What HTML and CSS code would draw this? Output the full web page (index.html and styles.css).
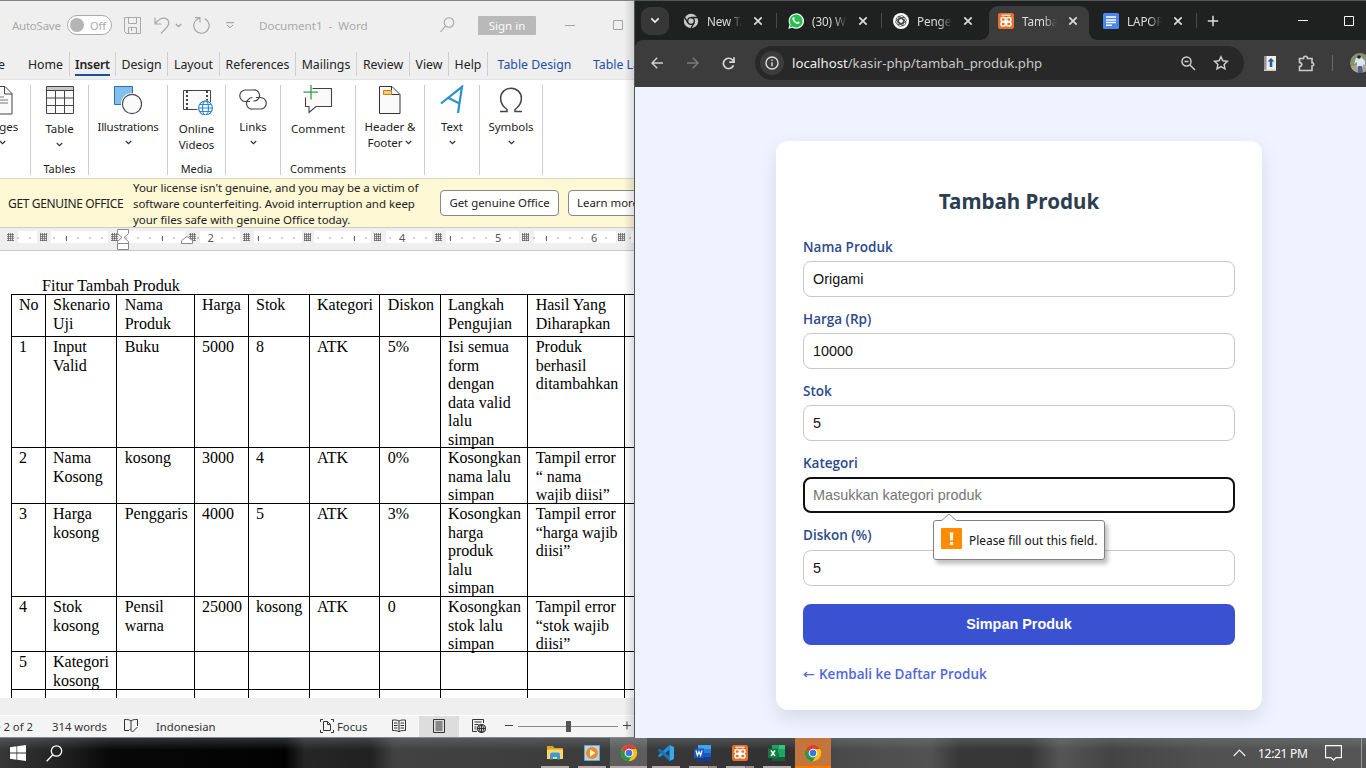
FILE: index.html
```html
<!DOCTYPE html>
<html lang="id">
<head>
<meta charset="utf-8">
<title>Tambah Produk</title>
<link rel="stylesheet" href="styles.css">
</head>
<body>
<svg class="defs" width="0" height="0">
  <defs>
    <symbol id="chev" viewBox="0 0 7 5"><path d="M.8 1l2.7 2.6L6.2 1" fill="none" stroke="#333" stroke-width="1.2"/></symbol>
    <symbol id="x" viewBox="0 0 10 10"><path d="M1.3 1.3l7.4 7.4M8.7 1.3L1.3 8.7" stroke="#dcdcdc" stroke-width="1.7"/></symbol>
    <symbol id="chrome" viewBox="0 0 18 18">
      <circle cx="9" cy="9" r="8.2" fill="#fbc116"/>
      <path d="M1.9 4.9A8.2 8.2 0 0 1 16.1 4.9L9 5.2 5.6 11z" fill="#e33b2e"/>
      <path d="M1.9 4.9A8.2 8.2 0 0 0 8.6 17.2L12.4 11 5.7 10.8z" fill="#279847"/>
      <circle cx="9" cy="9" r="4.3" fill="#fff"/><circle cx="9" cy="9" r="3.3" fill="#3578e5"/>
    </symbol>
    <symbol id="xampp" viewBox="0 0 16 16">
      <rect width="16" height="16" rx="2" fill="#e8702a"/>
      <path d="M3.500 2.200h9" stroke="#fff" stroke-width="1"/>
      <rect x="3" y="4.600" width="4.400" height="3.800" rx="1.600" fill="none" stroke="#fff" stroke-width="1.500"/>
      <rect x="8.600" y="4.600" width="4.400" height="3.800" rx="1.600" fill="none" stroke="#fff" stroke-width="1.500"/>
      <rect x="3" y="9" width="4.400" height="4" rx="1.600" fill="none" stroke="#fff" stroke-width="1.500"/>
      <rect x="8.600" y="9" width="4.400" height="4" rx="1.600" fill="none" stroke="#fff" stroke-width="1.500"/>
      <path d="M6 8.700h4" stroke="#fff" stroke-width="1.800"/>
    </symbol>
    <pattern id="grid" width="2" height="2" patternUnits="userSpaceOnUse"><path d="M0 .5h2M.5 0v2" stroke="#666" stroke-width=".8"/></pattern>
  </defs>
</svg>

<div class="desktop">
  <section class="word">
    <header class="titlebar">
      <span class="autosave">AutoSave</span>
      <span class="toggle"><i></i>Off</span>
      <svg class="i-save" width="17" height="17" viewBox="0 0 17 17" fill="none" stroke="#a9a9a9"><path d="M.5.5h16v16H2.500L.5 14.500zM4.500.5v6h8v-6M4.500 16.500v-6h8v6M7.500 11v3"/></svg>
      <svg class="i-undo" width="16" height="17" viewBox="0 0 16 17" fill="none" stroke="#a9a9a9" stroke-width="1.200"><path d="M1 .5v6.500h6.500M1.300 6.700C4 3 7 1 10.500 1.200c4.500.5 5.500 5.800 2.500 8.800l-6 6.500"/></svg>
      <svg class="i-uchev" width="7" height="5" viewBox="0 0 7 5"><path d="M.8 1l2.700 2.600L6.200 1" fill="none" stroke="#a0a0a0" stroke-width="1.200"/></svg>
      <svg class="i-redo" width="17" height="17" viewBox="0 0 17 17" fill="none" stroke="#a9a9a9" stroke-width="1.200"><path d="M2 .6h5v5M6.700 1C2.500 2.500.7 5.500.7 8.800a7.700 7.700 0 1 0 11-7.200"/></svg>
      <svg class="i-menu" width="8" height="7" viewBox="0 0 8 7" fill="none" stroke="#999"><path d="M0 .7h8M1 3l3 2.700L7 3"/></svg>
      <span class="doc">Document1&nbsp; -&nbsp; Word</span>
      <svg class="i-find" width="15" height="16" viewBox="0 0 15 16" fill="none" stroke="#a3a3a3" stroke-width="1.100"><circle cx="9" cy="5.500" r="4.800"/><path d="M5.600 9L.5 15"/></svg>
      <span class="signin">Sign in</span>
      <svg class="i-min" width="10" height="11" viewBox="0 0 10 11"><path d="M0 5.500h10" stroke="#a3a3a3"/></svg>
      <svg class="i-max" width="10" height="10" viewBox="0 0 10 10"><path d="M.5.500h9v9h-9z" fill="none" stroke="#a3a3a3"/></svg>
    </header>
    <nav class="tabs">
      <span class="t-file">File</span><span class="t-home">Home</span><span class="on"><b>Insert</b></span><span>Design</span><span>Layout</span><span>References</span><span>Mailings</span><span>Review</span><span>View</span><span>Help</span><span class="blue">Table Design</span><span class="blue tl">Table Layout</span>
    </nav>
    <div class="ribbon">
      <div class="grp pages">
        <svg width="22" height="30" viewBox="0 0 22 30"><path d="M1 1.500h13l7 7V29H1z" fill="#fafafa" stroke="#444"/><path d="M13.500 1.500v7.500h7.500" fill="none" stroke="#444"/><path d="M3 12h10M3 15h14M3 18h14" stroke="#777"/></svg>
        <span>Pages</span><svg class="cv"><use href="#chev"/></svg>
      </div>
      <div class="grp low">
        <svg width="28" height="30" viewBox="0 0 28 30"><path d="M.500 1.500h27v27H.500z" fill="#fafafa"/><path d="M.5 1.500h27V5H.5z" fill="#c8c8c8"/><path d="M.5 1.500h27v27H.500zM.5 5.500h27M.5 13h27M.5 20.500h27M9.500 5.500v23M18.500 5.500v23" fill="none" stroke="#444"/></svg>
        <span>Table</span><svg class="cv"><use href="#chev"/></svg><em>Tables</em>
      </div>
      <div class="grp">
        <svg width="28" height="30" viewBox="0 0 28 30"><path d="M.5 1.500h18v18H.500z" fill="#83beec" stroke="#2a6fb0"/><circle cx="18" cy="19" r="11" fill="#fff"/><circle cx="18" cy="19" r="9.600" fill="#fafafa" stroke="#444" stroke-width="1.100"/></svg>
        <span class="tight">Illustrations</span><svg class="cv"><use href="#chev"/></svg>
      </div>
      <div class="grp low">
        <svg class="vid" width="30" height="30" viewBox="0 0 30 30"><path d="M.5 5.500h27v19H.500z" fill="#fafafa" stroke="#444"/><path d="M4 6v18M24 6v18" stroke="#444" stroke-width="2" stroke-dasharray="2 2"/><circle cx="22.500" cy="23.500" r="8.300" fill="#fff"/><g fill="#fff" stroke="#2b88d8" stroke-width="1.200"><circle cx="22.500" cy="23" r="6.900"/><ellipse cx="22.500" cy="23" rx="3" ry="6.900"/><path d="M15.600 23h14M17 19.500h11M17 26.500h11"/></g></svg>
        <span>Online<br>Videos</span><em>Media</em>
      </div>
      <div class="grp">
        <svg width="28" height="30" viewBox="0 0 28 30" fill="none" stroke="#444" stroke-width="1.200"><path d="M11 16.500H6.500a5.500 5.500 0 0 1 0-11.500h8a5.500 5.500 0 0 1 4 9.700q-1.500 1.300-4 1.300"/><path d="M17 12.500h4.500a5.500 5.500 0 0 1 0 11.500h-8a5.500 5.500 0 0 1-4-9.700q1.500-1.800 4-1.800"/></svg>
        <span>Links</span><svg class="cv"><use href="#chev"/></svg>
      </div>
      <div class="grp low">
        <svg width="30" height="30" viewBox="0 0 30 30"><path d="M9 3.500h19.500v18H13l-7 6v-6H2.500v-9" fill="#fafafa" stroke="#444" stroke-width="1.100"/><path d="M8 0v14M.5 7h15" stroke="#fff" stroke-width="3"/><path d="M8 0v14.500M.5 7.200H15" stroke="#2f9e4f" stroke-width="1.300"/></svg>
        <span class="wide">Comment</span><em>Comments</em>
      </div>
      <div class="grp">
        <svg width="22" height="30" viewBox="0 0 22 30"><path d="M.5 1.500h12.500l8 8V28.500H.5z" fill="#fafafa" stroke="#333"/><path d="M12.500 1.500v8h8" fill="none" stroke="#333"/><path d="M4.500 5.500h8v4h-8z" fill="#fccb76" stroke="#d27a13"/></svg>
        <span>Header &amp;<br>Footer <svg class="cv in"><use href="#chev"/></svg></span>
      </div>
      <div class="grp">
        <svg width="24" height="30" viewBox="0 0 24 30" fill="none" stroke="#2e8fce" stroke-width="2.200"><path d="M1 18.500L22 1.800 18 28M8.500 13L19.500 18.500"/></svg>
        <span>Text</span><svg class="cv"><use href="#chev"/></svg>
      </div>
      <div class="grp">
        <svg width="26" height="30" viewBox="0 0 26 30" fill="none" stroke="#444" stroke-width="1.500"><path d="M2 26.500h7v-2C5 21.500 2.600 18 2.600 13.500 2.600 7.500 7 3.300 13 3.300s10.400 4.200 10.400 10.200c0 4.500-2.400 8-6.400 11v2h7"/></svg>
        <span>Symbols</span><svg class="cv"><use href="#chev"/></svg>
      </div>
    </div>
    <div class="notice">
      <span class="n-title">GET GENUINE OFFICE</span>
      <p>Your license isn't genuine, and you may be a victim of<br>software counterfeiting. Avoid interruption and keep<br>your files safe with genuine Office today.</p>
      <span class="btn">Get genuine Office</span><span class="btn b2">Learn more</span>
    </div>
    <div class="ruler">
      <svg width="635" height="22" viewBox="0 0 635 22">
        <path fill="#fff" d="M18 3h19v12H18zM51 3h57v12H51zM124 3h61v12h-61zM200 3h40v12h-40zM254 3h48v12h-48zM314 3h57v12h-57zM386 3h46v12h-46zM446 3h73v12h-73zM534 3h82v12h-82zM631 3h4v12h-4z"/>
        <path stroke="#666" stroke-width="1.200" stroke-dasharray="1.200 10.800" d="M17.500 10H200M221.500 10H392M413.500 10H488M509.500 10H584M605.500 10H635"/>
        <path stroke="#666" d="M66.500 8v5M162.500 8v5M258.500 8v5M354.500 8v5M450.500 8v5M546.500 8v5"/>
        <path fill="#efefef" d="M5 4h11v10H5zM38 4h11v10H38zM110 4h8v10h-8zM188 4h9v10h-9zM241 4h11v10h-11zM303 4h10v10h-10zM372 4h11v10h-11zM433 4h11v10h-11zM520 4h11v10h-11zM617 4h11v10h-11z"/>
        <path fill="url(#grid)" d="M7 5h7v8H7zM40 5h7v8h-7zM111 5h7v8h-7zM189 5h7v8h-7zM243 5h7v8h-7zM304 5h7v8h-7zM374 5h7v8h-7zM435 5h7v8h-7zM522 5h7v8h-7zM618 5h7v8h-7z"/>
        <path fill="#fff" stroke="#888" d="M117.500 1.500h11v4l-4.500 4 4.500 4v2h-11v-2l4.500-4-4.500-4zM117.500 15.500h11v6h-11zM181.500 15.500v-3l5.500-4 5.500 4v3z"/>
        <g class="rnum"><text x="207.500" y="13.500">2</text><text x="399" y="13.500">4</text><text x="495" y="13.500">5</text><text x="591" y="13.500">6</text></g>
      </svg>
    </div>
    <div class="paper">
      <div class="caption">Fitur Tambah Produk</div>
      <div class="table">
        <div>No</div><div>Skenario<br>Uji</div><div>Nama<br>Produk</div><div>Harga</div><div>Stok</div><div>Kategori</div><div>Diskon</div><div>Langkah<br>Pengujian</div><div>Hasil Yang<br>Diharapkan</div><div></div>
        <div>1</div><div>Input<br>Valid</div><div>Buku</div><div>5000</div><div>8</div><div>ATK</div><div>5%</div><div>Isi semua<br>form<br>dengan<br>data valid<br>lalu<br>simpan</div><div>Produk<br>berhasil<br>ditambahkan</div><div></div>
        <div>2</div><div>Nama<br>Kosong</div><div>kosong</div><div>3000</div><div>4</div><div>ATK</div><div>0%</div><div>Kosongkan<br>nama lalu<br>simpan</div><div>Tampil error<br>“ nama<br>wajib diisi”</div><div></div>
        <div>3</div><div>Harga<br>kosong</div><div>Penggaris</div><div>4000</div><div>5</div><div>ATK</div><div>3%</div><div>Kosongkan<br>harga<br>produk<br>lalu<br>simpan</div><div>Tampil error<br>“harga wajib<br>diisi”</div><div></div>
        <div>4</div><div>Stok<br>kosong</div><div>Pensil<br>warna</div><div>25000</div><div>kosong</div><div>ATK</div><div>0</div><div>Kosongkan<br>stok lalu<br>simpan</div><div>Tampil error<br>“stok wajib<br>diisi”</div><div></div>
        <div>5</div><div>Kategori<br>kosong</div><div></div><div></div><div></div><div></div><div></div><div></div><div></div><div></div>
        <div></div><div></div><div></div><div></div><div></div><div></div><div></div><div></div><div></div><div></div>
      </div>
    </div>
    <footer class="status">
      <span class="s-page">Page 2 of 2</span><span class="s-words">314 words</span>
      <svg class="s-proof" width="14" height="14" viewBox="0 0 14 14" fill="none" stroke="#333"><path d="M7 2v9M7 2C5.500.5 3 .5.500.500v11H5M7 2C8.500.5 11 .5 13.500.500V7M5.500 10l3 3 5-5"/></svg>
      <span class="s-lang">Indonesian</span>
      <svg class="s-focus" width="14" height="14" viewBox="0 0 14 14" fill="none" stroke="#333"><path d="M3 .5H.500V3M11 .5h2.500V3M.5 11v2.500H3M13.500 11v2.500H11M3.500 2.500h4l3 3v6h-7zM7.500 2.500v3h3"/></svg>
      <span class="s-ft">Focus</span>
      <svg class="s-read" width="14" height="14" viewBox="0 0 14 14" fill="none" stroke="#333"><path d="M7 2v11M7 2C5 .8 3 1 .5 1v10.500c2.500 0 5 0 6.500 1.300M7 2C9 .8 11 1 13.500 1v10.500c-2.500 0-5 0-6.500 1.300M2 4h3.500M2 6.500h3.500M2 9h3.500M8.500 4H12M8.500 6.500H12M8.500 9H12"/></svg>
      <span class="s-print"><svg width="12" height="14" viewBox="0 0 12 14" fill="none" stroke="#333"><path d="M.5.500h11v13H.500zM2.500 3h7M2.500 5h7M2.500 7h7M2.500 9h7M2.500 11h7"/></svg></span>
      <svg class="s-web" width="14" height="14" viewBox="0 0 14 14" fill="none" stroke="#333"><path d="M5 12.500H.5v-12h11V4M2.500 3h7M2.500 5.500h4M2.500 8h2M2.500 10h2"/><circle cx="9.500" cy="9.500" r="4" fill="#eee" stroke-width="1.200"/><path d="M5.500 9.500h8M9.500 5.500v8"/><ellipse cx="9.500" cy="9.500" rx="2" ry="4"/></svg>
      <svg class="s-zoom" width="128" height="12" viewBox="0 0 128 12"><path d="M0 5.500h8M118 5.500h8M122 1.500v8" stroke="#444"/><path d="M13 6.500h100" stroke="#888"/><path d="M61 1h5v11h-5z" fill="#555"/></svg>
    </footer>
  </section>

  <section class="browser">
    <header class="strip">
      <span class="drop"><svg width="10" height="7" viewBox="0 0 10 7"><path d="M1.300 1.300L5 5l3.700-3.700" fill="none" stroke="#eee" stroke-width="1.700"/></svg></span>
      <div class="tab"><svg width="16" height="16" viewBox="0 0 16 16"><circle cx="8" cy="8" r="7.200" fill="#c9c9c9"/><circle cx="8" cy="8" r="3.300" fill="#c9c9c9" stroke="#1f2020" stroke-width="1.300"/><path d="M8 4.500h7M4.900 9.800L1.500 4M11.100 9.800L7.800 15.500" stroke="#1f2020" stroke-width="1.300"/></svg><span>New Tab</span><svg class="x"><use href="#x"/></svg></div>
      <div class="tab sep"><svg width="16" height="16" viewBox="0 0 16 16"><path d="M.3 15.800l1.200-4.200A7.700 7.700 0 1 1 4.500 14.700z" fill="#fff"/><path d="M1.700 14.400l.9-2.900A6.500 6.500 0 1 1 4.700 13.600z" fill="#25c050"/><path d="M5.200 4.200c.8-.7 1.200.3 1.500 1.200.2.500-.7.900-.5 1.300.7 1.300 1.600 2 2.800 2.500.5.200.8-1 1.300-.8 2 .8 1.500 1.300 1 1.900-1.500 1.500-4.200 0-5.500-1.500-1.300-1.400-2.300-3.200-.6-4.600z" fill="#fff"/></svg><span>(30) Wha</span><svg class="x"><use href="#x"/></svg></div>
      <div class="tab sep"><svg width="16" height="16" viewBox="0 0 16 16"><circle cx="8" cy="8" r="8" fill="#fff"/><g fill="none" stroke="#444" stroke-width=".8"><rect x="5.700" y="2.600" width="5.400" height="8.200" rx="2.600"/><rect x="5.700" y="2.600" width="5.400" height="8.200" rx="2.600" transform="rotate(60 8 8)"/><rect x="5.700" y="2.600" width="5.400" height="8.200" rx="2.600" transform="rotate(120 8 8)"/><rect x="5.700" y="2.600" width="5.400" height="8.200" rx="2.600" transform="rotate(180 8 8)"/><rect x="5.700" y="2.600" width="5.400" height="8.200" rx="2.600" transform="rotate(240 8 8)"/><rect x="5.700" y="2.600" width="5.400" height="8.200" rx="2.600" transform="rotate(300 8 8)"/></g></svg><span>Pengem</span><svg class="x"><use href="#x"/></svg></div>
      <div class="tab active"><svg width="16" height="16"><use href="#xampp"/></svg><span>Tambah</span><svg class="x"><use href="#x"/></svg></div>
      <div class="tab"><svg width="16" height="16" viewBox="0 0 16 16"><rect width="16" height="16" rx="1.500" fill="#4a86f0"/><path d="M3 4h10M3 7h10M3 9.500h10M3 12.300h6" stroke="#fff" stroke-width="1.500"/></svg><span>LAPORA</span><svg class="x"><use href="#x"/></svg></div>
      <i class="bar"></i>
      <svg class="plus" width="12" height="12" viewBox="0 0 12 12"><path d="M6 .8v10.400M.8 6h10.400" stroke="#ddd" stroke-width="1.500"/></svg>
      <svg class="wmin" width="10" height="10" viewBox="0 0 10 10"><path d="M0 4.500h10" stroke="#fff"/></svg>
      <svg class="wmax" width="10" height="10" viewBox="0 0 10 10"><path d="M.5.500h9v9h-9z" fill="none" stroke="#fff"/></svg>
    </header>
    <div class="toolbar">
      <svg class="back" width="12" height="12" viewBox="0 0 12 12" fill="none" stroke="#cfcfcf" stroke-width="1.500"><path d="M12 6H1M6.200.8L1 6l5.200 5.200"/></svg>
      <svg class="fwd" width="12" height="12" viewBox="0 0 12 12" fill="none" stroke="#7b7b7b" stroke-width="1.500"><path d="M0 6h11M5.800.8L11 6l-5.200 5.200"/></svg>
      <svg class="rel" width="13" height="13" viewBox="0 0 13 13" fill="none" stroke="#d8d8d8" stroke-width="1.700"><path d="M11.500 8.200A5.200 5.200 0 1 1 10.500 3L12 4.800"/><path d="M12 .3v4.900H7.200"/></svg>
      <div class="url">
        <span class="info"><svg width="14" height="14" viewBox="0 0 14 14" fill="none" stroke="#ddd" stroke-width="1.400"><circle cx="7" cy="7" r="6"/><path d="M7 6.300v4M7 3.500V5"/></svg></span>
        <span class="addr">localhost<i>/kasir-php/tambah_produk.php</i></span>
        <svg class="mag" width="15" height="15" viewBox="0 0 15 15" fill="none" stroke="#ccc" stroke-width="1.500"><circle cx="5.500" cy="5.500" r="4.500"/><path d="M9 9l5 5M3.500 5.500h4"/></svg>
        <svg class="star" width="16" height="16" viewBox="0 0 16 16"><path d="M8 1.700l1.900 4.100 4.500.5-3.300 3.100.9 4.400-4-2.200-4 2.200.9-4.400L1.600 6.300l4.500-.5z" fill="none" stroke="#d0d0d0" stroke-width="1.400"/></svg>
      </div>
      <svg class="ext1" width="12" height="15" viewBox="0 0 12 15"><path d="M0 0h12v15H0z" fill="#f3eee0"/><path d="M0 0h2.500v15H0z" fill="#9d8da0"/><path d="M0 13.500h12v1.500H0z" fill="#ccc"/><path d="M7 2l3.500 3.500H8.300V11H5.700V5.500H3.500z" fill="#1a62a8"/></svg>
      <svg class="puz" width="17" height="17" viewBox="0 0 17 17"><path d="M1.500 3.500h4C5.500.5 9.500.5 9.500 3.500H14v4.300c2.300 0 2.300 3.200 0 3.200V15.500H1.500v-4c3-.3 3-3.700 0-4z" fill="none" stroke="#ccc" stroke-width="1.600"/></svg>
      <i class="vsep"></i>
      <svg class="ava" width="20" height="20" viewBox="0 0 20 20"><circle cx="10" cy="10" r="10" fill="#8c9070"/><path d="M1 14a10 10 0 0 0 17 2L14 9z" fill="#b2a490"/><path d="M6 5l5-1 4 4v4l-2-1v3H7V9L4 11z" fill="#dce5f2"/><circle cx="9" cy="4" r="1.800" fill="#222"/><path d="M8 13h4l1 7H8z" fill="#4d668f"/></svg>
    </div>
    <main class="page">
      <div class="card">
        <h1>Tambah Produk</h1>
        <label>Nama Produk</label><div class="field">Origami</div>
        <label>Harga (Rp)</label><div class="field">10000</div>
        <label>Stok</label><div class="field">5</div>
        <label>Kategori</label><div class="field focus">Masukkan kategori produk
          <div class="tip"><svg class="arrow" width="16" height="8" viewBox="0 0 16 8"><path d="M0 8l8-7 8 7" fill="#fff" stroke="#8a8a8a"/></svg><span class="warn"><svg width="21" height="21" viewBox="0 0 21 21"><path d="M8.700 4.500h3.600l-.5 8H9.200zM8.900 14h3.200v3H8.900z" fill="#fff"/></svg></span><span>Please fill out this field.</span></div>
        </div>
        <label class="last">Diskon (%)</label><div class="field">5</div>
        <div class="submit">Simpan Produk</div>
        <a class="backlink"><i>←</i>Kembali ke Daftar Produk</a>
      </div>
    </main>
  </section>

  <footer class="taskbar">
    <svg class="win" width="16" height="16" viewBox="0 0 16 16" fill="#fff"><path d="M0 2.200l6.500-.9v6.300H0zM7.200 1.200L16 0v7.600H7.200zM0 8.400h6.500v6.300L0 13.800zM7.200 8.400H16V16l-8.800-1.200z"/></svg>
    <svg class="sch" width="17" height="17" viewBox="0 0 17 17" fill="none" stroke="#fff" stroke-width="1.300"><circle cx="10.500" cy="6" r="5.200"/><path d="M6.800 9.800L.7 16.300"/></svg>
    <div class="apps">
      <span><svg width="18" height="16" viewBox="0 0 18 16"><path d="M1 1h6l1.500 2H17v11H1z" fill="#d9a520"/><path d="M1 4.500h16V14H1z" fill="#fbd768"/><path d="M4 14.500V9.500q0-2 2-2h6q2 0 2 2v5h-3V12H7v2.500z" fill="#3f9bd8"/></svg></span>
      <span><svg width="16" height="16" viewBox="0 0 16 16"><path d="M.5.500h15v15H.500z" fill="#b5d8f0" stroke="#6ba6cf"/><circle cx="8" cy="8" r="6" fill="#f28a1e"/><path d="M6 4.500L11.500 8 6 11.500z" fill="#fff"/></svg></span>
      <span class="lit"><svg width="18" height="18"><use href="#chrome"/></svg></span>
      <span><svg width="16" height="16" viewBox="0 0 16 16"><path d="M11.500 0v4.700L1.700 12.300.3 11.500V10z" fill="#1e90dc"/><path d="M.3 4.600l1.400-.9L11.500 11.300V16L.3 6z" fill="#1477bd"/><path d="M11.500 0L16 2v12l-4.500 2z" fill="#35a8f3"/></svg></span>
      <span class="multi"><svg width="17" height="16" viewBox="0 0 17 16"><path d="M4 0h13v4H4z" fill="#41a5ee"/><path d="M4 4h13v4H4z" fill="#2b7cd3"/><path d="M4 8h13v4H4z" fill="#185abd"/><path d="M4 12h13v4H4z" fill="#103f91"/><path d="M0 3.500h10v9.500H0z" fill="#185abd"/><path d="M2 5.500l1.400 5L5 6.500l1.600 4L8 5.500" fill="none" stroke="#fff" stroke-width="1.200"/></svg></span>
      <span class="multi"><svg width="16" height="16"><use href="#xampp"/></svg></span>
      <span><svg width="17" height="16" viewBox="0 0 17 16"><path d="M4 0h13v16H4z" fill="#21a366"/><path d="M11 0h6v4h-6z" fill="#33c481"/><path d="M4 8h7v4H4z" fill="#107c41"/><path d="M4 12h13v4H4z" fill="#185c37"/><path d="M0 3.500h10v9.500H0z" fill="#107c41"/><path d="M3 5.500l4 5.500M7 5.500L3 11" stroke="#fff" stroke-width="1.400"/></svg></span>
      <span class="hot"><svg width="18" height="18"><use href="#chrome"/></svg></span>
    </div>
    <svg class="up" width="13" height="8" viewBox="0 0 13 8"><path d="M.7 7l5.800-5.800L12.300 7" fill="none" stroke="#eee" stroke-width="1.200"/></svg>
    <span class="clock">12:21 PM</span>
    <svg class="note" width="17" height="16" viewBox="0 0 17 16"><path d="M.6.600h15.800v12H11l-2.500 2.600L6 12.600H.600z" fill="none" stroke="#fff" stroke-width="1.100"/></svg>
    <i class="peek"></i>
  </footer>
</div>
</body>
</html>
```

FILE: styles.css
```css
* { box-sizing: border-box; }
body { margin: 0; overflow: hidden; font-family: "Noto Sans", "Open Sans", sans-serif; font-size: 12px; color: #222; }
.defs { display: block; height: 0; }
svg { flex: none; display: block; }
span { white-space: nowrap; }
i, em { font-style: normal; }

.desktop { width: 1366px; height: 768px; display: grid; grid-template-columns: 635px 731px; grid-template-rows: 738px 30px; overflow: hidden; }

/* word processor window */
.word { display: flex; flex-direction: column; overflow: hidden; background: #efefef; border-top: 1px solid #858084; border-right: 1px solid #55565c; position: relative; }
.word::after { content: ""; position: absolute; top: 0; right: 0; bottom: 0; width: 10px; background: linear-gradient(90deg, transparent, rgba(0,0,0,.13)); }
.word > * { flex: none; }
.titlebar { height: 49px; padding-bottom: 1px; display: flex; align-items: center; color: #aaa; padding-left: 12px; }
.titlebar > * { flex: none; }
.autosave { width: 55px; font-size: 11.500px; letter-spacing: -.25px; }
.toggle { width: 45px; height: 20px; border: 1px solid #aaa; border-radius: 10px; background: #fff; display: flex; align-items: center; gap: 6px; padding-left: 2px; font-size: 11px; }
.toggle i { width: 14px; height: 14px; border-radius: 50%; background: #b4b4b4; }
.i-save { margin-left: 12px; }
.i-undo { margin-left: 13px; }
.i-uchev { margin-left: 5px; }
.i-redo { margin-left: 11px; }
.i-menu { margin-left: 16px; }
.doc { margin-left: 25px; width: 181px; white-space: pre; font-size: 11.600px; }
.i-find { margin-left: 0; }
.signin { margin-left: 23px; width: 58px; height: 19px; line-height: 20px; text-align: center; background: #b9b9b9; color: #fafafa; border-radius: 1px; font-size: 11.500px; }
.i-min { margin-left: 29px; }
.i-max { margin-left: 38px; }

.tabs { height: 29px; padding-top: 2px; display: grid; grid-template-columns: 22px 48px 46px 52px 52px 76px 61px 53px 39px 39px 93px 80px; font-size: 12.300px; }
.tabs span { height: 24px; line-height: 25px; text-align: center; border-right: 1px solid #cfcfcf; overflow: visible; }
.tabs .t-file { border: 0; direction: rtl; padding-right: 17px; }
.tabs .on b { display: inline-block; height: 24px; border-bottom: 2px solid #1f4e9b; font-weight: 600; letter-spacing: -.2px; }
.tabs .blue { border: 0; color: #1f4ea8; }
.tabs .tl { text-align: left; padding-left: 12px; }

.ribbon { height: 100px; background: #fff; border-top: 1px solid #e3e3e3; border-bottom: 1px solid #d8d6c8; display: grid; grid-template-columns: 31px 58px 79px 58px 55px 75px 69px 55px 63px; padding: 5px 0 4px; font-size: 11.500px; }
.grp { display: flex; flex-direction: column; align-items: center; border-right: 1px solid #ccc; height: 90px; line-height: 16px; text-align: center; }
.grp > span { margin-top: 4px; letter-spacing: -.05px; }
.low > span { margin-top: 6px; }
.grp > .tight { letter-spacing: -.25px; }
.grp > .wide { letter-spacing: .1px; }
.grp em { margin-top: auto; margin-bottom: -2px; font-size: 10.900px; }
.pages { overflow: hidden; padding-right: 26px; }
.pages > * { flex: none; }
.cv { width: 7px; height: 5px; margin-top: 5px; }
.cv.in { display: inline-block; vertical-align: 2px; margin: 0; }
.vid { margin-left: 2px; }

.notice { height: 49px; background: #fff8d5; border-bottom: 1px solid #ccc; display: flex; align-items: center; padding-left: 8px; overflow: hidden; }
.notice > * { flex: none; }
.n-title { width: 125px; letter-spacing: -.35px; }
.notice p { margin: 2px 0 0; width: 307px; line-height: 16px; white-space: nowrap; font-size: 11.500px; letter-spacing: -.05px; }
.btn { height: 26px; line-height: 24px; border: 1px solid #888; border-radius: 4px; background: #fff; width: 119px; text-align: center; margin-right: 9px; font-size: 11.400px; }
.b2 { width: 80px; }
.ruler { height: 23px; background: #efefef; border-bottom: 1px solid #c8c8c8; }
.rnum { font-size: 11px; fill: #555; }

.paper { height: 447px; background: #fff; overflow: hidden; padding-top: 26px; font: 16px/18.500px "Liberation Serif", serif; color: #000; }
.caption { padding-left: 42px; height: 17px; white-space: nowrap; font-size: 16.200px; }
.table { margin-left: 11px; display: grid; grid-template-columns: 34px 71px 78px 54px 61px 70px 61px 87px 97px 20px; grid-template-rows: 42px 111px 56px 93px 55px 38px 9px; }
.table div { border-left: 1px solid #000; border-top: 1px solid #000; padding: 1px 0 0 7px; white-space: nowrap; font-size: 16px; }
.table div:nth-child(10n+3), .table div:nth-child(10n+9), .table div:nth-child(10n+7) { padding-left: 7.700px; }

.status { height: 40px; padding-top: 17px; background: linear-gradient(#efefef 17px, #fff 17px, #fff 18px, #f4f4f4 18px); display: flex; align-items: center; font-size: 11.300px; color: #333; border-bottom: 1px solid #888; }
.status > * { flex: none; }
.s-page { width: 33px; display: flex; justify-content: flex-end; }
.s-words { margin-left: 19px; width: 72px; }
.s-lang { margin-left: 18px; width: 164px; }
.s-ft { margin-left: 3px; width: 55px; }
.s-print { margin-left: 13px; width: 40px; height: 21px; background: #ddd; display: flex; align-items: center; justify-content: center; }
.s-web { margin-left: 13px; }
.s-zoom { margin-left: 19px; }

/* browser window */
.browser { display: flex; flex-direction: column; overflow: hidden; background: #1f2020; }
.strip { height: 40px; border-top: 1px solid #555; background: #1f2020; display: flex; align-items: center; color: #ddd; }
.strip > * { flex: none; }
.drop { width: 28px; height: 28px; border-radius: 9px; background: #373737; margin: 0 5px 0 6px; display: flex; align-items: center; justify-content: center; }
.tab { width: 105px; height: 34px; display: flex; align-items: center; padding-left: 9px; position: relative; font-size: 11.700px; letter-spacing: -.1px; }
.tab span { width: 35px; margin-left: 8px; margin-right: 11px; overflow: hidden; -webkit-mask-image: linear-gradient(90deg, #000 62%, transparent 100%); }
.tab .x { width: 10px; height: 10px; }
.sep::before { content: ""; width: 1px; height: 15px; background: #4a4a4a; position: absolute; left: -3px; }
.active { margin-top: 5px; }
.active::before { content: ""; position: absolute; left: 0; right: 5px; top: 0; bottom: 0; background: #3c3c3c; border-radius: 9px 9px 0 0; }
.active::after { content: ""; position: absolute; left: -8px; right: -3px; bottom: 0; height: 8px; background: radial-gradient(circle at 0 0, transparent 7.500px, #3c3c3c 8px) left / 8px 8px no-repeat, radial-gradient(circle at 100% 0, transparent 7.500px, #3c3c3c 8px) right / 8px 8px no-repeat; }
.active > * { position: relative; }
.active svg, .active span { margin-top: -5px; }
.bar { width: 1px; height: 15px; background: #4a4a4a; margin-left: -3px; }
.plus { margin-left: 10px; }
.wmin { margin-left: 79px; }
.wmax { margin-left: 36px; }
.toolbar { height: 47px; background: #3c3c3c; display: flex; align-items: center; padding-left: 16px; padding-bottom: 1px; border-top-left-radius: 8px; }
.toolbar > * { flex: none; }
.fwd { margin-left: 24px; }
.rel { margin-left: 23px; }
.url { margin-left: 20px; width: 489px; height: 34px; border-radius: 17px; background: #282828; display: flex; align-items: center; padding-left: 5px; }
.url > * { flex: none; }
.info { width: 24px; height: 24px; border-radius: 50%; background: #3c3c3c; display: flex; align-items: center; justify-content: center; }
.addr { margin-left: 8px; width: 389px; font-size: 13.200px; color: #eee; }
.addr i { color: #c8c8c8; }
.star { margin-left: 17px; }
.ext1 { margin-left: 20px; }
.puz { margin-left: 22px; }
.vsep { width: 1px; height: 16px; background: #6a6a6a; margin-left: 17px; }
.ava { margin-left: 17px; }

.page { flex: 1; background: #eff3ff; padding: 54px 0 0 141px; }
.card { width: 486px; height: 569px; padding: 42px 27px 0; border-radius: 12px; background: #fff; box-shadow: 0 8px 20px rgba(0,0,0,.1); }
h1 { margin: 0; height: 36px; line-height: 36px; text-align: center; font-size: 20.600px; font-weight: 700; color: #2c3e50; }
label { display: block; margin: 14px 0 6px; font: 600 13.500px/16px "Open Sans", "Noto Sans", sans-serif; color: #2c4a8c; }
h1 + label { margin-top: 20px; }
.field { height: 36px; border: 1px solid #c8c8c8; border-radius: 8px; padding-left: 9px; font: 14.400px/34px "Liberation Sans", sans-serif; color: #111; position: relative; }
.focus { border: 2px solid #101010; line-height: 32px; padding-left: 8px; color: #757575; }
.last { margin-bottom: 7px; }
.tip { position: absolute; z-index: 2; left: 128px; top: 41px; width: 172px; height: 40px; background: #fff; border: 1px solid #808080; border-radius: 3px; box-shadow: 3px 4px 4px rgba(0,0,0,.25); display: flex; align-items: center; gap: 7px; padding-left: 7px; font: 11.900px/16px "Noto Sans", sans-serif; color: #111; }
.warn { width: 21px; height: 21px; background: #ff8c00; border-radius: 1px; margin-top: -4px; }
.arrow { position: absolute; left: 7px; top: -8px; }
.submit { margin-top: 18px; height: 41px; line-height: 41px; border-radius: 8px; background: #3a52d1; color: #fff; text-align: center; font-family: "Liberation Sans", sans-serif; font-weight: 700; font-size: 14.400px; }
.backlink { display: flex; margin-top: 19px; font: 600 13.500px/20px "Open Sans", "Noto Sans", sans-serif; color: #5068d8; }
.backlink i { width: 16px; font: 14px/20px "DejaVu Sans", sans-serif; }

/* taskbar */
.taskbar { grid-column: 1 / 3; display: flex; align-items: center; color: #fff; padding-left: 10px; background: linear-gradient(rgba(140,150,155,.3), transparent 12px), linear-gradient(90deg, #373737 0, #222 60px, #080808 110px, #020202 285px, #262626 305px, #202020 370px, #424242 395px, #3a3a3a 640px, #303030 790px, #4a4a4a 840px, #525252 930px, #373737 960px, #363636 1030px, #555 1060px, #444 1110px, #505050 1200px, #555 1366px); }
.sch { margin-left: 20px; }
.apps { margin-left: 473px; height: 30px; display: flex; }
.apps span { width: 37px; height: 30px; display: flex; justify-content: center; align-items: center; position: relative; }
.apps span::after { content: ""; position: absolute; left: 5px; right: 4px; bottom: 0; height: 2px; background: #b7acab; }
.apps .multi::after { background: linear-gradient(90deg, #b7acab 19px, #777 19px, #777 20px, #958d8c 20px); }
.apps .lit { background: rgba(255,255,255,.18); }
.apps .lit::after { left: 0; right: 0; }
.apps .hot { width: 36px; background: #c2753c; }
.apps .hot::after { left: 0; right: 0; background: #ff7900; }
.up { margin-left: 402px; }
.clock { margin-left: 12px; width: 67px; font-size: 12px; letter-spacing: -.3px; }
.peek { width: 1px; height: 30px; background: #999; margin-left: 19px; }
```
